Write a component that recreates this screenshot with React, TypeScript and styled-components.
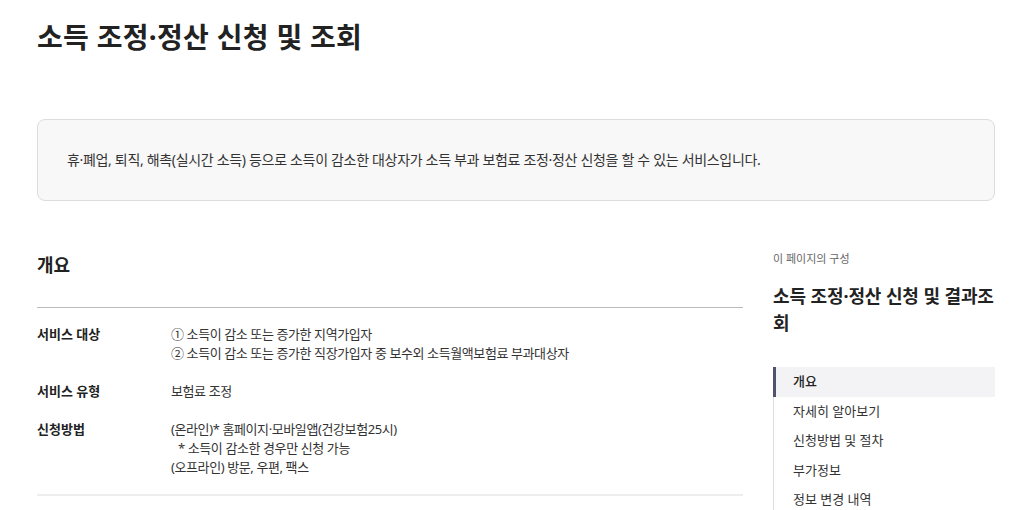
import React from 'react';
import styled, { createGlobalStyle } from 'styled-components';

const GlobalStyle = createGlobalStyle`
  * {
    box-sizing: border-box;
  }

  body {
    margin: 0;
    background: #ffffff;
    color: #333333;
    font-family: "Noto Sans", "Noto Sans CJK KR", sans-serif;
  }

  ul {
    margin: 0;
    padding: 0;
    list-style: none;
  }
`;

const Page = styled.div`
  width: 1024px;
  padding: 19px 29px 0 37px;
`;

const Title = styled.h1`
  margin: 0;
  font-size: 28px;
  line-height: 36px;
  font-weight: 700;
  color: #222222;
  letter-spacing: 0.3px;
`;

const Summary = styled.div`
  margin-top: 64px;
  padding: 30px 29px;
  background-color: #f8f8f8;
  border: 1px solid #dcdcdc;
  border-radius: 8px;
  font-size: 14px;
  line-height: 20px;
  color: #333333;
  letter-spacing: -0.32px;
`;

const Columns = styled.div`
  display: flex;
  gap: 30px;
  margin-top: 40px;
`;

const Main = styled.section`
  flex: 0 0 706px;
`;

const SectionTitle = styled.h2`
  margin: 0;
  padding-top: 11px;
  font-size: 18px;
  line-height: 26px;
  font-weight: 700;
  color: #222222;
`;

const InfoList = styled.dl`
  margin: 29px 0 0;
  padding: 17px 0 17px;
  border-top: 1px solid #bcbcbc;
  border-bottom: 2px solid #eeeeee;
  display: flex;
  flex-direction: column;
  gap: 19px;
`;

const InfoRow = styled.div`
  display: grid;
  grid-template-columns: 134px 1fr;
  font-size: 13px;
  line-height: 19px;
`;

const Label = styled.dt`
  font-weight: 700;
  color: #222222;
`;

const Value = styled.dd`
  margin: 0;
  color: #333333;
  letter-spacing: -0.4px;
`;

const Line = styled.div<{ $indent?: boolean }>`
  padding-left: ${p => (p.$indent ? '7px' : '0')};
`;

const Aside = styled.aside`
  flex: 0 0 222px;
`;

const AsideCaption = styled.div`
  padding-top: 10px;
  font-size: 11px;
  line-height: 16px;
  color: #666666;
`;

const AsideTitle = styled.div`
  margin-top: 16px;
  font-size: 18px;
  line-height: 27px;
  font-weight: 700;
  color: #222222;
  letter-spacing: -0.1px;
`;

const Nav = styled.ul`
  margin-top: 30px !important;
  border-left: 1px solid #dddddd;
`;

const NavItem = styled.li<{ $active?: boolean }>`
  margin-left: -1px;
  padding-left: 17px;
  height: 29.5px;
  line-height: 29.5px;
  font-size: 13px;
  color: ${p => (p.$active ? '#222222' : '#333333')};
  font-weight: ${p => (p.$active ? 500 : 400)};
  background-color: ${p => (p.$active ? '#f3f3f6' : 'transparent')};
  border-left: 3px solid ${p => (p.$active ? '#4f536b' : 'transparent')};
`;

const rows = [
  {
    label: '서비스 대상',
    lines: [
      { text: '① 소득이 감소 또는 증가한 지역가입자' },
      { text: '② 소득이 감소 또는 증가한 직장가입자 중 보수외 소득월액보험료 부과대상자' },
    ],
  },
  {
    label: '서비스 유형',
    lines: [{ text: '보험료 조정' }],
  },
  {
    label: '신청방법',
    lines: [
      { text: '(온라인)* 홈페이지·모바일앱(건강보험25시)' },
      { text: '* 소득이 감소한 경우만 신청 가능', indent: true },
      { text: '(오프라인) 방문, 우편, 팩스' },
    ],
  },
];

const navItems = ['개요', '자세히 알아보기', '신청방법 및 절차', '부가정보', '정보 변경 내역'];

const App: React.FC = () => {
  return (
    <>
      <GlobalStyle />
      <Page>
        <Title>소득 조정·정산 신청 및 조회</Title>

        <Summary>
          휴·폐업, 퇴직, 해촉(실시간 소득) 등으로 소득이 감소한 대상자가 소득 부과 보험료 조정·정산 신청을 할 수 있는 서비스입니다.
        </Summary>

        <Columns>
          <Main>
            <SectionTitle>개요</SectionTitle>
            <InfoList>
              {rows.map(row => (
                <InfoRow key={row.label}>
                  <Label>{row.label}</Label>
                  <Value>
                    {row.lines.map((line, i) => (
                      <Line key={i} $indent={line.indent}>{line.text}</Line>
                    ))}
                  </Value>
                </InfoRow>
              ))}
            </InfoList>
          </Main>

          <Aside>
            <AsideCaption>이 페이지의 구성</AsideCaption>
            <AsideTitle>소득 조정·정산 신청 및 결과조회</AsideTitle>
            <Nav>
              {navItems.map((item, index) => (
                <NavItem key={item} $active={index === 0}>{item}</NavItem>
              ))}
            </Nav>
          </Aside>
        </Columns>
      </Page>
    </>
  );
};

export default App;
